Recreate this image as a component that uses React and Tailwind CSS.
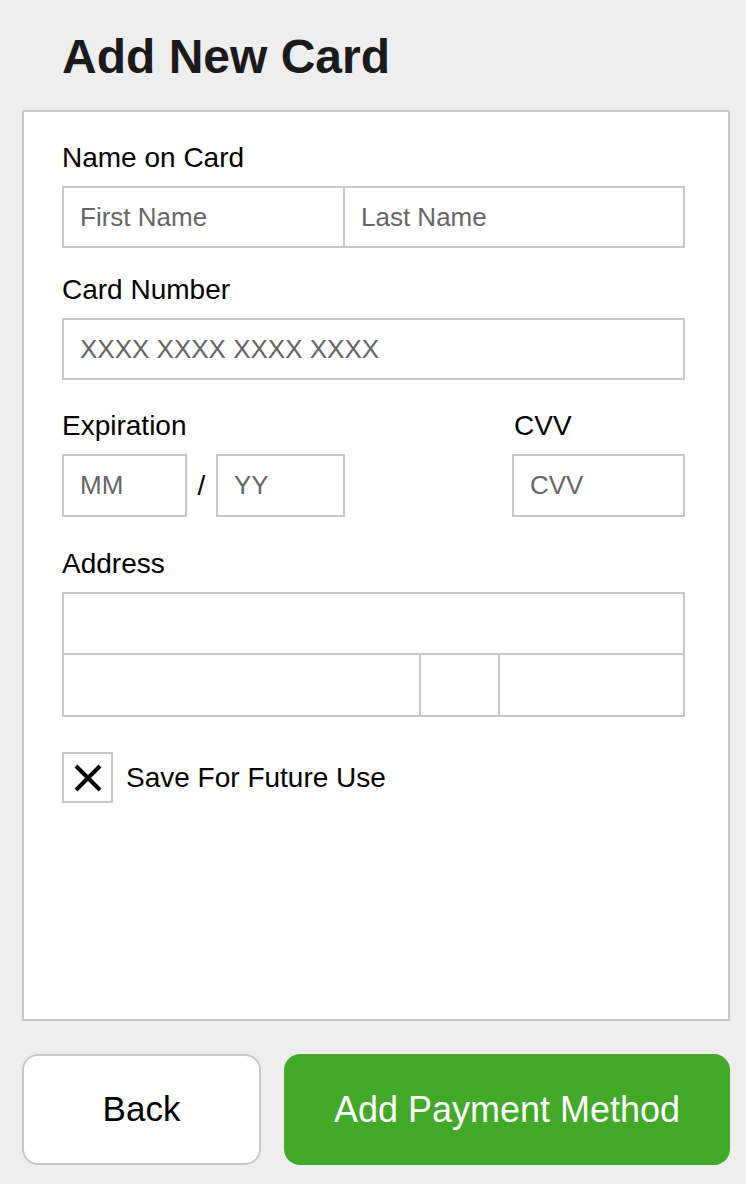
import React from 'react';

const font = { fontFamily: '"Liberation Sans", Arial, Helvetica, sans-serif' };

const inputCls =
  'box-border h-[62px] border-2 border-[#c8c8c8] bg-white px-4 text-[26px] text-black outline-none placeholder:text-[#666666]';

const Label = ({ children, className = '' }) => (
  <div className={`text-[28px] leading-8 text-black mb-3 ${className}`}>{children}</div>
);

export default function App() {
  return (
    <div className="min-h-[1184px] w-[746px] bg-[#eeeeee] pt-[29px]" style={font}>
      <h1 className="ml-[62px] text-[48px] font-bold leading-[56px] text-[#1a1a1a] mb-[25px]">Add New Card</h1>

      <div className="ml-[22px] w-[708px] h-[911px] box-border border-2 border-[#c8c8c8] bg-white pl-[38px] pt-[30px]">
        <div className="w-[623px]">
          {/* name */}
          <Label>Name on Card</Label>
          <div className="flex">
            <input className={`${inputCls} w-[283px]`} placeholder="First Name" readOnly />
            <input className={`${inputCls} w-[340px] border-l-0`} placeholder="Last Name" readOnly />
          </div>

          {/* card number */}
          <Label className="mt-[26px]">Card Number</Label>
          <input className={`${inputCls} w-[623px]`} placeholder="XXXX XXXX XXXX XXXX" readOnly />

          {/* expiration + cvv */}
          <div className="mt-[30px] flex">
            <div>
              <Label>Expiration</Label>
              <div className="flex items-center">
                <input className={`${inputCls} w-[125px] h-[63px]`} placeholder="MM" readOnly />
                <span className="w-[29px] text-center text-[28px] text-black">/</span>
                <input className={`${inputCls} w-[129px] h-[63px]`} placeholder="YY" readOnly />
              </div>
            </div>
            <div className="ml-auto">
              <Label className="pl-[2px]">CVV</Label>
              <input className={`${inputCls} w-[173px] h-[63px]`} placeholder="CVV" readOnly />
            </div>
          </div>

          {/* address */}
          <Label className="mt-[31px]">Address</Label>
          <div className="box-border w-[623px] border-2 border-[#c8c8c8]">
            <div className="h-[61px] border-b-2 border-[#c8c8c8]" />
            <div className="flex h-[60px]">
              <div className="w-[357px] border-r-2 border-[#c8c8c8]" />
              <div className="w-[79px] border-r-2 border-[#c8c8c8]" />
              <div className="flex-1" />
            </div>
          </div>

          {/* save */}
          <div className="mt-[35px] flex items-center">
            <div className="box-border flex h-[51px] w-[51px] items-center justify-center border-2 border-[#c8c8c8]">
              <svg width="28" height="28" viewBox="0 0 28 28">
                <path d="M2 2 L26 26 M26 2 L2 26" stroke="#000" strokeWidth="4" />
              </svg>
            </div>
            <span className="ml-[13px] text-[28px] leading-8 text-black">Save For Future Use</span>
          </div>
        </div>
      </div>

      <div className="ml-[22px] mt-[33px] flex w-[708px] gap-[23px]">
        <button className="box-border h-[111px] w-[239px] rounded-[16px] border-2 border-[#c8c8c8] bg-white text-[35px] text-black">
          Back
        </button>
        <button className="h-[111px] flex-1 rounded-[16px] bg-[#43a928] text-[36px] text-white">
          Add Payment Method
        </button>
      </div>
    </div>
  );
}
